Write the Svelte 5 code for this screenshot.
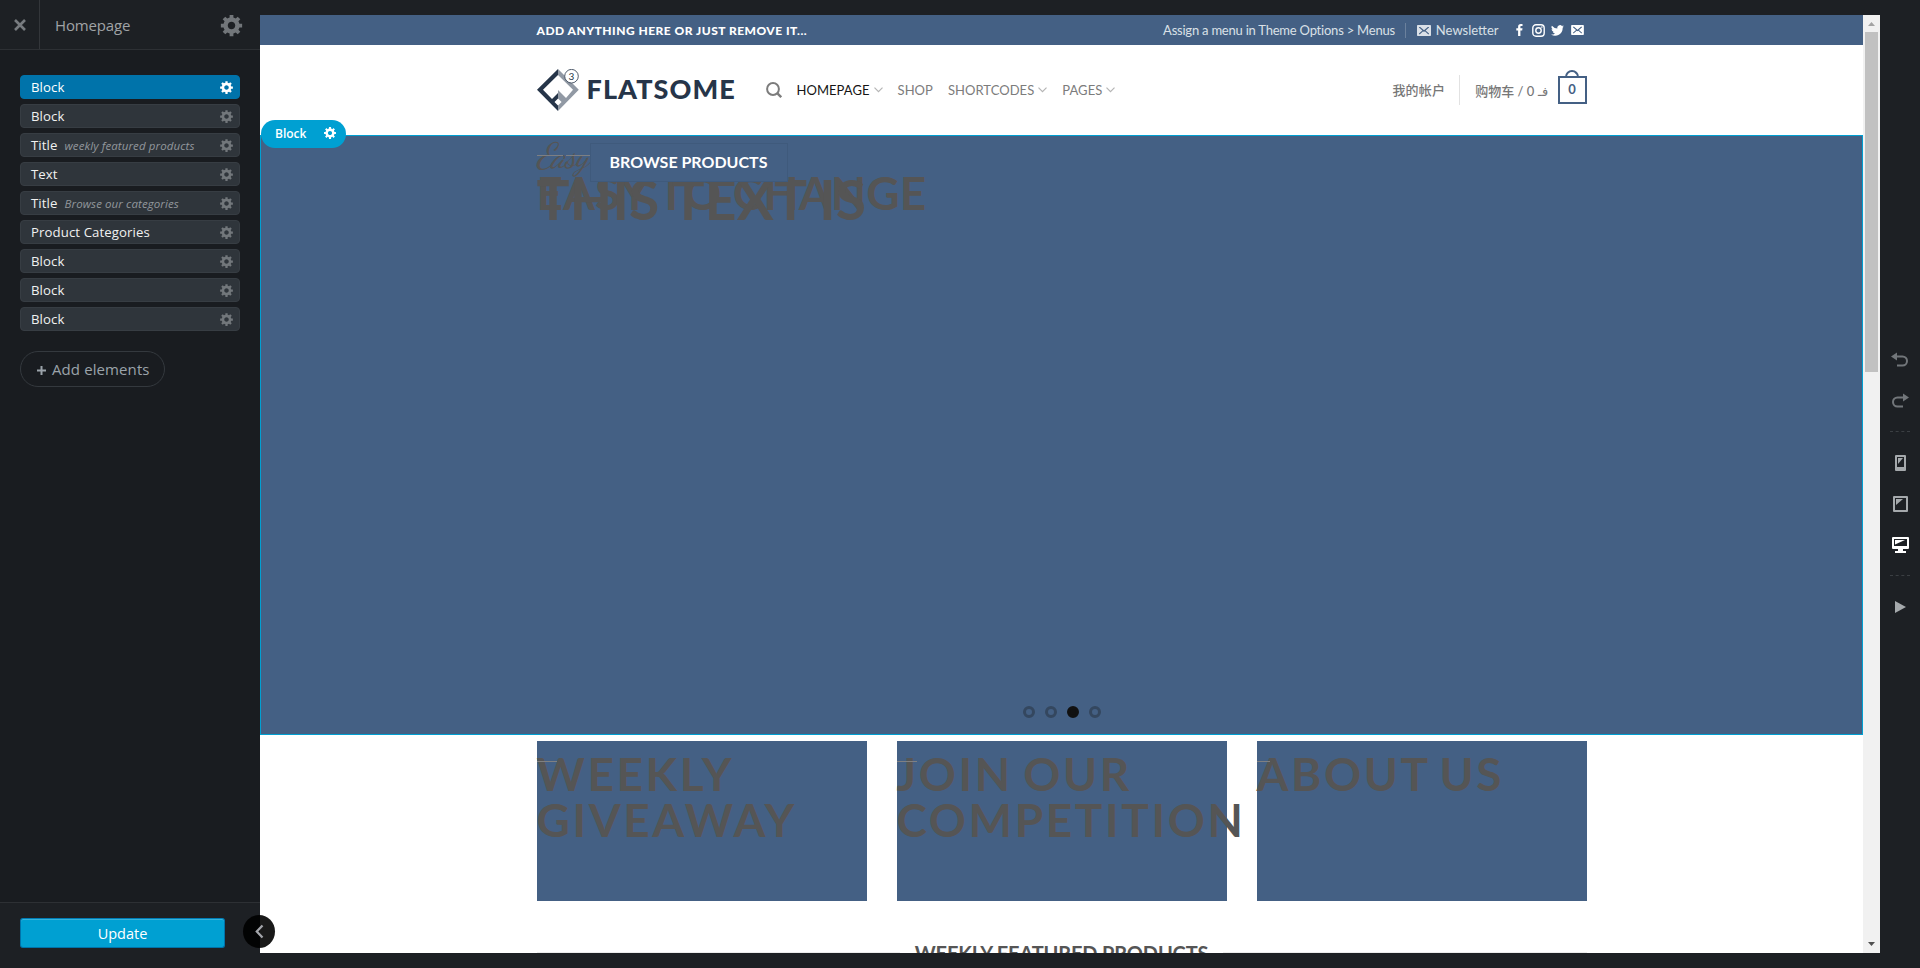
<script>
	let selected = $state(0);

	const blocks = [
		{ name: 'Block' },
		{ name: 'Block' },
		{ name: 'Title', info: 'weekly featured products' },
		{ name: 'Text' },
		{ name: 'Title', info: 'Browse our categories' },
		{ name: 'Product Categories' },
		{ name: 'Block' },
		{ name: 'Block' },
		{ name: 'Block' }
	];

	const navItems = [
		{ display: 'Homepage', active: true, dropdown: true },
		{ display: 'Shop' },
		{ display: 'Shortcodes', dropdown: true },
		{ display: 'Pages', dropdown: true }
	];

	const banners = [
		{ lines: ['Weekly', 'Giveaway'], rule: 20 },
		{ lines: ['Join our', 'Competition'], rule: 20 },
		{ lines: ['About us'], rule: 13 }
	];

	const slides = [0, 1, 2, 3];
	const activeSlide = 2;
</script>

{#snippet gear(size)}
	<svg class="gear" width={size} height={size} viewBox="-0.5 0.5 20 20" fill="currentColor">
		<path
			d="M18 12h-2.18c-.17.7-.44 1.35-.81 1.93l1.54 1.54-2.1 2.1-1.54-1.54c-.58.36-1.23.63-1.91.79V19H8v-2.18c-.68-.16-1.33-.43-1.91-.79l-1.54 1.54-2.12-2.12 1.54-1.54c-.36-.58-.63-1.23-.79-1.91H1V9.03h2.17c.16-.7.44-1.35.8-1.94L2.43 5.55l2.1-2.1 1.54 1.54c.58-.37 1.24-.64 1.93-.81V2h3v2.18c.68.16 1.33.43 1.91.79l1.54-1.54 2.12 2.12-1.54 1.54c.36.59.64 1.24.8 1.94H18V12zm-8.5 1.5c1.66 0 3-1.34 3-3s-1.34-3-3-3-3 1.34-3 3 1.34 3 3 3z"
		/>
	</svg>
{/snippet}

{#snippet envelope(width, height)}
	<svg {width} {height} viewBox="0 0 14 11">
		<path
			fill="currentColor"
			fill-rule="evenodd"
			d="M.8 0h12.4c.5 0 .8.3.8.8v9.4c0 .5-.3.8-.8.8H.8C.3 11 0 10.7 0 10.2V.8C0 .3.3 0 .8 0zM2 2v.6l3.4 2.9L2 8.4V9.2h.9l3.2-2.9.9.7.9-.7 3.2 2.9h.9v-.8L8.6 5.5 12 2.6V2h-1.200L7 5.3 3.2 2z"
		/>
	</svg>
{/snippet}

<div class="builder">
	<aside class="sidebar">
		<header class="sidebar-header">
			<button class="close" aria-label="Close">
				<svg width="12" height="12" viewBox="0 0 12 12" fill="none" stroke="currentColor" stroke-width="2.6">
					<path d="M1 1l10 10M11 1L1 11" />
				</svg>
			</button>
			<h1>Homepage</h1>
			<button class="settings" aria-label="Settings">{@render gear(25)}</button>
		</header>

		<div class="sidebar-body">
			<ul>
				{#each blocks as block, i}
					<li>
						<button class="block" class:selected={selected === i} onclick={() => (selected = i)}>
							<span>{block.name}</span>
							{#if block.info}<em>{block.info}</em>{/if}
							{@render gear(15)}
						</button>
					</li>
				{/each}
			</ul>
			<button class="add">
				<svg width="9" height="9" viewBox="0 0 9 9" stroke="currentColor" stroke-width="2">
					<path d="M0 4.5h9M4.500 0v9" />
				</svg>
				<span>Add elements</span>
			</button>
		</div>

		<footer class="sidebar-footer">
			<button class="update">Update</button>
		</footer>

		<button class="collapse" aria-label="Collapse">
			<svg width="9" height="15" viewBox="0 0 9 15" fill="none" stroke="currentColor" stroke-width="2.3">
				<path d="M7.5 1.5L1.8 7.5l5.7 6" />
			</svg>
		</button>
	</aside>

	<main class="preview">
		<div class="page">
			<div class="top-bar">
				<div class="container">
					<strong>ADD ANYTHING HERE OR JUST REMOVE IT...</strong>
					<div class="top-links">
						<span class="assign">Assign a menu in Theme Options &gt; Menus</span>
						<span class="newsletter">{@render envelope(14, 11)}<span>Newsletter</span></span>
						<div class="social">
							<svg class="facebook" width="7" height="12" viewBox="0 0 7 12" fill="currentColor">
								<path d="M6.5 0v2.100H5.3c-.7 0-.9.4-.9.9v1.300h2.100l-.3 2.100H4.400V12H2.100V6.400H.3V4.300h1.800V2.700C2.100 1 3.100 0 4.700 0z" />
							</svg>
							<svg width="13" height="13" viewBox="0 0 13 13" fill="none" stroke="currentColor" stroke-width="1.4">
								<rect x=".8" y=".8" width="11.4" height="11.4" rx="3.2" />
								<circle cx="6.5" cy="6.5" r="2.7" />
								<circle cx="9.9" cy="3.1" r=".8" fill="currentColor" stroke="none" />
							</svg>
							<svg width="13" height="11" viewBox="0 0 24 20" fill="currentColor">
								<path d="M24 2.4a10 10 0 0 1-2.8.8A5 5 0 0 0 23.3.5a10 10 0 0 1-3.1 1.2 4.900 4.900 0 0 0-8.400 4.500A14 14 0 0 1 1.700 1a4.900 4.900 0 0 0 1.500 6.600 5 5 0 0 1-2.200-.6 4.900 4.900 0 0 0 3.900 4.900 5 5 0 0 1-2.200.1 4.900 4.900 0 0 0 4.600 3.400A9.900 9.900 0 0 1 0 17.500 14 14 0 0 0 21.500 5z" />
							</svg>
							{@render envelope(13, 10)}
						</div>
					</div>
				</div>
			</div>

			<header class="masthead">
				<div class="container">
					<a class="logo" href="/">
						<svg width="42" height="42" viewBox="0 0 42 42">
							<path d="M21 0v6L6 20.800l9 9.200 6-6v5.500l-3.500 3.500L21 36.400V42L0 20.800z" fill="#263549" />
							<path d="M21 0l20.800 20.800L21 42v-5.600l3.600-3.500-3.600-3.500V21l8 8 7-8.200L21 6z" fill="#9199a4" />
							<circle cx="34.5" cy="7.2" r="6.8" fill="#fff" stroke="#3c495b" stroke-width=".9" />
							<text x="34.5" y="10.8" text-anchor="middle">3</text>
						</svg>
						<span>FLATSOME</span>
					</a>
					<nav>
						<svg width="16" height="16" viewBox="0 0 16 16" fill="none" stroke="currentColor" stroke-width="2">
							<circle cx="7" cy="7" r="5.9" />
							<path d="M11.2 11.2l4 4" stroke-width="2.4" />
						</svg>
						{#each navItems as item}
							<a href="/" class:active={item.active}>
								{item.display}
								{#if item.dropdown}
									<svg width="9" height="6" viewBox="0 0 9 6" fill="none" stroke="#b5b5b5" stroke-width="1.2">
										<path d="M.5.7l4 4 4-4" />
									</svg>
								{/if}
							</a>
						{/each}
					</nav>
					<div class="account">
						<span class="login">我的帐户</span>
						<span class="price">购物车 / 0 <bdi>فـ</bdi></span>
						<span class="bag">0</span>
					</div>
				</div>
			</header>

			<section class="slider">
				<div class="slide">
					<h2 class="exchange">EASY TO CHANGE</h2>
					<h2 class="this-text">THIS TEXT IS</h2>
					<div class="script">Easy</div>
					<div class="rules"><i></i><i></i></div>
					<button class="browse">BROWSE PRODUCTS</button>
				</div>
				<div class="dots">
					{#each slides as slide}
						<span class:active={slide === activeSlide}></span>
					{/each}
				</div>
				<div class="block-label">
					<span>Block</span>
					{@render gear(14)}
				</div>
			</section>

			<section class="banners">
				{#each banners as banner}
					<div class="banner">
						<h2>
							{#each banner.lines as line}<span>{line}</span>{/each}
						</h2>
						<i style:width="{banner.rule}px"></i>
					</div>
				{/each}
			</section>

			<div class="section-title">
				<b></b>
				<h3>WEEKLY FEATURED PRODUCTS</h3>
				<b></b>
			</div>
		</div>

		<div class="scrollbar">
			<svg width="7" height="4" viewBox="0 0 7 4"><path d="M0 4L3.5 0 7 4z" fill="#a3a3a3" /></svg>
			<div class="thumb"></div>
			<svg class="down" width="7" height="4" viewBox="0 0 7 4"><path d="M0 0h7L3.5 4z" fill="#505050" /></svg>
		</div>
	</main>

	<div class="tools">
		<button aria-label="Undo">
			<svg width="18" height="16" viewBox="0 0 18 16">
				<path d="M5 4.5h6.5a4.5 4.5 0 0 1 0 9H6" fill="none" stroke="currentColor" stroke-width="2" />
				<path d="M0 4.5L6 .5v8z" fill="currentColor" />
			</svg>
		</button>
		<button aria-label="Redo">
			<svg width="18" height="16" viewBox="0 0 18 16">
				<path d="M13 4.5H6.5a4.5 4.5 0 0 0 0 9H12" fill="none" stroke="currentColor" stroke-width="2" />
				<path d="M18 4.5L12 .5v8z" fill="currentColor" />
			</svg>
		</button>
		<hr />
		<button class="device" aria-label="Phone">
			<svg width="11" height="16" viewBox="0 0 11 16" fill="currentColor">
				<path fill-rule="evenodd" d="M1 0h9q1 0 1 1v14q0 1-1 1H1q-1 0-1-1V1q0-1 1-1zM2 2v10h7V2z" />
				<path d="M3 3h5L3 9z" />
			</svg>
		</button>
		<button class="device" aria-label="Tablet">
			<svg width="15" height="16" viewBox="0 0 15 16" fill="currentColor">
				<path fill-rule="evenodd" d="M1 0h13q1 0 1 1v14q0 1-1 1H1q-1 0-1-1V1q0-1 1-1zM2 2v12h11V2z" />
				<path d="M3 3h7L3 9z" />
			</svg>
		</button>
		<button class="device current" aria-label="Desktop">
			<svg width="17" height="16" viewBox="0 0 17 16" fill="currentColor">
				<path fill-rule="evenodd" d="M1 0h15q1 0 1 1v10q0 1-1 1h-5v2h3v2H3v-2h3v-2H1q-1 0-1-1V1q0-1 1-1zM2 2v7h13V2z" />
				<path d="M3 3h10L3 7.5z" />
			</svg>
		</button>
		<hr />
		<button class="device" aria-label="Play">
			<svg width="11" height="12" viewBox="0 0 11 12" fill="currentColor"><path d="M0 0l11 6-11 6z" /></svg>
		</button>
	</div>
</div>

<style>
	:global(body) {
		margin: 0;
		background: #1d2024;
	}

	.builder {
		display: grid;
		grid-template-columns: 260px 1620px 40px;
		height: 968px;
		overflow: hidden;
		background: #1d2024;
		font-family: 'Open Sans', 'Noto Sans', sans-serif;
	}

	button {
		background: none;
		border: none;
		padding: 0;
		margin: 0;
		color: inherit;
		font-family: inherit;
		cursor: pointer;
	}

	svg {
		display: block;
		flex: none;
	}

	h1,
	h2,
	h3,
	ul {
		margin: 0;
		padding: 0;
	}

	a {
		color: inherit;
		text-decoration: none;
	}

	/* Sidebar */
	.sidebar {
		position: relative;
		display: flex;
		flex-direction: column;
		min-height: 0;
		background: #191c20;
	}

	.sidebar-header {
		display: flex;
		align-items: stretch;
		height: 49px;
		background: #1d2024;
		border-bottom: 1px solid #2d3034;
		color: #a0a3a6;
	}

	.close {
		display: grid;
		place-items: center;
		width: 40px;
		border-right: 1px solid #33363a;
		color: #777b7f;
	}

	h1 {
		flex: 1;
		padding-left: 15px;
		font-size: 15px;
		line-height: 51px;
		font-weight: 400;
		letter-spacing: -0.15px;
	}

	.settings {
		margin-right: 16px;
		padding-top: 1px;
		color: #72767a;
	}

	.sidebar-body {
		flex: 1;
		padding: 25px 20px;
	}

	ul {
		display: grid;
		gap: 5px;
		list-style: none;
	}

	.block {
		display: flex;
		align-items: center;
		box-sizing: border-box;
		width: 100%;
		height: 24px;
		padding: 0 5px 0 10px;
		border: 1px solid #373d43;
		border-radius: 4px;
		background: #2f353b;
		color: #f1f1f1;
		font-size: 13.2px;
		letter-spacing: 0.1px;
	}

	.block em {
		margin-left: 7px;
		color: #92979b;
		font-size: 11.5px;
		letter-spacing: 0.1px;
	}

	.block .gear {
		margin-left: auto;
		color: #72777b;
	}

	.block.selected {
		background: #0073aa;
		border-color: #0073aa;
		color: #fff;
	}

	.block.selected .gear {
		color: #fff;
	}

	.add {
		display: flex;
		align-items: center;
		gap: 6px;
		box-sizing: border-box;
		width: 145px;
		height: 36px;
		margin-top: 20px;
		padding-left: 16px;
		border: 1px solid #34393e;
		border-radius: 18px;
		color: #9ba3aa;
		font-size: 15px;
		letter-spacing: 0.1px;
	}

	.add svg {
		margin-top: 3px;
	}

	.sidebar-footer {
		height: 50px;
		padding: 15px 35px 0 20px;
		background: #1d2024;
		border-top: 1px solid #2d3034;
	}

	.update {
		box-sizing: border-box;
		width: 205px;
		height: 30px;
		border: 1px solid #0073aa;
		border-top-color: #007db5;
		border-radius: 3px;
		background: #00a0d2;
		box-shadow: inset 0 1px 0 #36b3dc;
		color: #fff;
		font-size: 14.5px;
	}

	.collapse {
		position: absolute;
		z-index: 2;
		right: -15px;
		bottom: 20px;
		display: grid;
		place-items: center;
		width: 32px;
		height: 33px;
		border-radius: 50%;
		background: rgba(0, 0, 0, 0.9);
		color: #a3a5aa;
	}

	/* Page preview */
	.preview {
		display: flex;
		height: 938px;
		margin-top: 15px;
		overflow: hidden;
		background: #fff;
	}

	.page {
		width: 1603px;
		font-family: Lato, 'Noto Sans CJK SC', sans-serif;
		color: #555;
	}

	.container {
		display: flex;
		align-items: center;
		width: 1050px;
		height: 100%;
		margin: 0 auto;
	}

	.top-bar {
		height: 30px;
		background: #446084;
		color: #fff;
	}

	.top-bar strong {
		font-size: 12px;
		font-weight: 900;
		letter-spacing: 0.48px;
	}

	.top-links {
		display: flex;
		align-items: center;
		margin-left: auto;
		color: #dae0e7;
		font-size: 13px;
	}

	.assign {
		padding-right: 10px;
		border-right: 1px solid #6b819d;
		letter-spacing: -0.22px;
		line-height: 15px;
	}

	.newsletter {
		display: flex;
		align-items: center;
		gap: 5px;
		padding-left: 11px;
	}

	.social {
		display: flex;
		align-items: center;
		gap: 6.5px;
		margin: 0 3px 0 17px;
		color: #fff;
	}

	.facebook {
		margin-right: 2.5px;
	}

	.masthead {
		height: 90px;
		background: #fff;
	}

	.logo {
		display: flex;
		align-items: center;
		width: 229px;
		gap: 8px;
		color: #263549;
		font-size: 27px;
		font-weight: 900;
		letter-spacing: 1.1px;
	}

	.logo span {
		padding-bottom: 3px;
	}

	.logo text {
		fill: #263549;
		font-size: 10px;
		font-weight: 400;
		letter-spacing: 0;
	}

	nav {
		display: flex;
		align-items: center;
		gap: 15px;
		color: #7c7c7c;
		font-size: 13px;
		letter-spacing: 0.05px;
		text-transform: uppercase;
	}

	nav a {
		display: flex;
		align-items: center;
		gap: 4px;
	}

	nav a.active {
		color: #151515;
	}

	.account {
		display: flex;
		align-items: center;
		margin-left: auto;
		color: #777;
		font-size: 13px;
		font-weight: 500;
	}

	.login {
		padding-right: 14px;
		border-right: 1px solid #e2e2e2;
		letter-spacing: 0.2px;
		line-height: 30px;
	}

	.price {
		padding: 0 10px 0 15px;
		white-space: nowrap;
	}

	.bag {
		position: relative;
		box-sizing: border-box;
		width: 29px;
		height: 28px;
		border: 2px solid #446084;
		color: #446084;
		font-weight: 700;
		line-height: 23px;
		text-align: center;
	}

	.bag::before {
		content: '';
		position: absolute;
		top: -8px;
		left: 5px;
		box-sizing: border-box;
		width: 14px;
		height: 7px;
		border: 2px solid #446084;
		border-bottom: 0;
		border-radius: 7px 7px 0 0;
	}

	/* Slider: layers are stacked on top of each other */
	.slider {
		position: relative;
		box-sizing: border-box;
		height: 600px;
		border: 1px solid #00a0d2;
		background: #446084;
	}

	.slide {
		position: relative;
		width: 1050px;
		margin: 0 auto;
	}

	.slide h2,
	.script,
	.rules,
	.browse {
		position: absolute;
		white-space: nowrap;
	}

	.exchange {
		top: 29px;
		left: 0;
		font-size: 46px;
		line-height: 56px;
		letter-spacing: 0.1px;
	}

	.this-text {
		top: 32px;
		left: 0;
		font-size: 55px;
		line-height: 62px;
		letter-spacing: 0.3px;
	}

	.script {
		top: 1px;
		left: 0;
		font: italic 35px/38px 'Dancing Script', 'Liberation Serif', serif;
		letter-spacing: -1.5px;
	}

	.rules {
		top: 19px;
		left: 0;
		display: flex;
		gap: 3px;
	}

	.rules i {
		width: 26px;
		height: 1px;
		background: #7d7f83;
	}

	.browse {
		top: 7px;
		left: 53px;
		width: 198px;
		height: 39px;
		padding-bottom: 2px;
		border: 1px solid #3f5a7c;
		background: #446084;
		color: #fff;
		font-size: 16px;
		font-weight: 700;
	}

	.dots {
		position: absolute;
		bottom: 16px;
		left: 0;
		right: 0;
		display: flex;
		justify-content: center;
		gap: 10px;
	}

	.dots span {
		box-sizing: border-box;
		width: 12px;
		height: 12px;
		border: 3px solid #34475f;
		border-radius: 50%;
	}

	.dots .active {
		border-color: #111;
		background: #111;
	}

	.block-label {
		position: absolute;
		top: -16px;
		left: 0;
		display: flex;
		align-items: center;
		justify-content: space-between;
		box-sizing: border-box;
		width: 85px;
		height: 28px;
		padding: 0 9px 2px 14px;
		border-radius: 14px;
		background: #00a0d2;
		color: #fff;
		font-family: 'Open Sans', sans-serif;
		font-size: 12px;
		font-weight: 600;
	}

	/* Banners */
	.banners {
		display: grid;
		grid-template-columns: repeat(3, 330px);
		gap: 30px;
		width: 1050px;
		margin: 6px auto 0;
	}

	.banner {
		position: relative;
		height: 160px;
		background: #446084;
	}

	.banner h2 {
		padding-top: 10px;
		font-size: 46px;
		line-height: 46px;
		letter-spacing: 2.6px;
		word-spacing: -3.5px;
		text-transform: uppercase;
	}

	.banner h2 span {
		display: block;
	}

	.banner i {
		position: absolute;
		top: 20px;
		left: 0;
		height: 1px;
		background: #7f8082;
	}

	.section-title {
		display: flex;
		align-items: center;
		gap: 15px;
		width: 1050px;
		margin: 38px auto 0;
	}

	.section-title b {
		flex: 1;
		height: 2px;
		background: #ececec;
	}

	.section-title h3 {
		font-size: 20px;
		line-height: 28px;
		letter-spacing: -0.15px;
	}

	/* Scrollbar */
	.scrollbar {
		display: flex;
		flex-direction: column;
		align-items: center;
		box-sizing: border-box;
		width: 17px;
		padding: 7px 0;
		background: #f1f1f1;
	}

	.thumb {
		width: 13px;
		height: 340px;
		margin-top: 6px;
		background: #c1c1c1;
	}

	.down {
		margin-top: auto;
	}

	/* Right toolbar */
	.tools {
		display: flex;
		flex-direction: column;
		align-items: center;
		justify-content: center;
		padding-bottom: 2px;
		color: #72767a;
	}

	.tools button {
		display: grid;
		place-items: center;
		width: 40px;
		height: 41px;
	}

	.tools .device {
		color: #a5a9ac;
	}

	.tools .current {
		color: #fff;
	}

	.tools hr {
		width: 20px;
		height: 0;
		margin: 10px 0;
		border: 0;
		border-top: 1px dashed #3b3f43;
	}
</style>
